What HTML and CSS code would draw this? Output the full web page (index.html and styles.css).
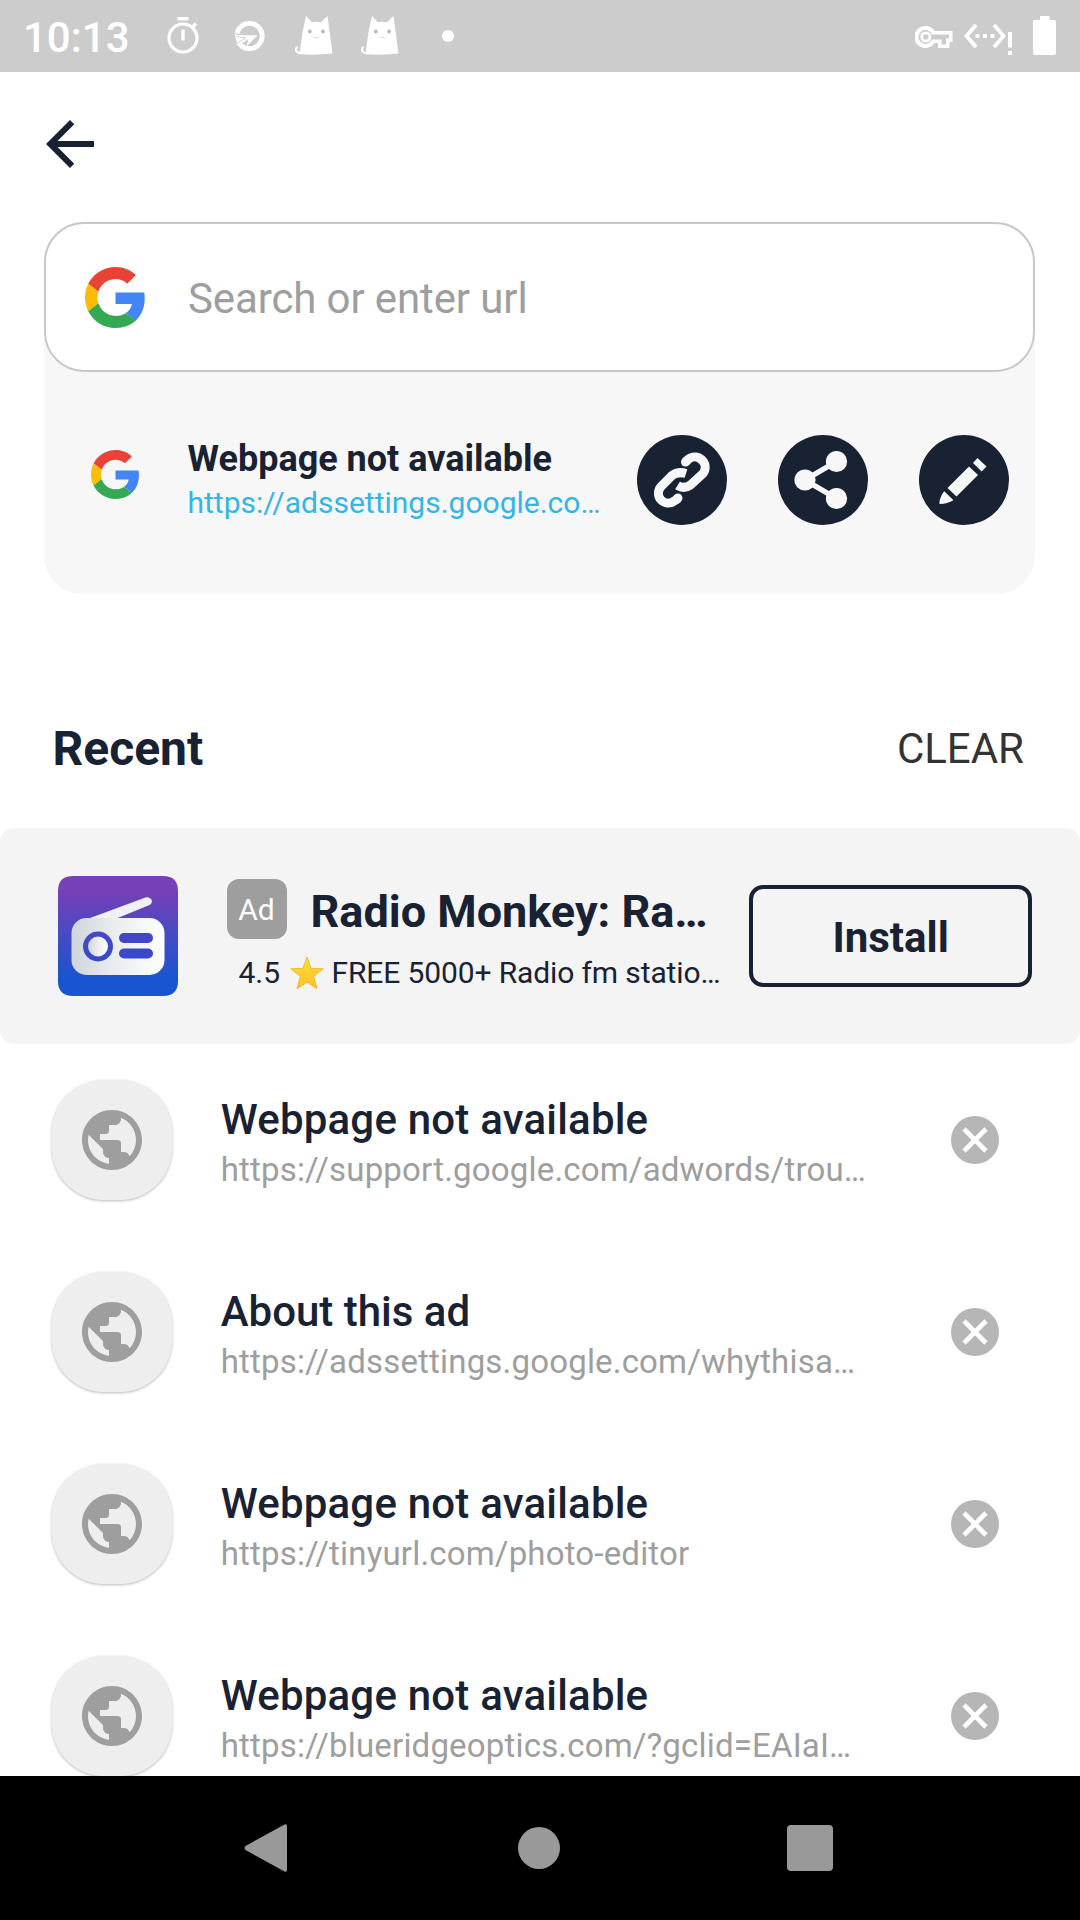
FILE: index.html
```html
<!DOCTYPE html>
<html lang="en">
<head>
<meta charset="utf-8">
<title>Search</title>
<link rel="stylesheet" href="styles.css">
</head>
<body>
<svg class="defs" width="0" height="0" aria-hidden="true">
  <symbol id="google" viewBox="0 0 48 48">
    <path fill="#EA4335" d="M24 9.5c3.54 0 6.71 1.22 9.21 3.6l6.85-6.85C35.9 2.38 30.47 0 24 0 14.62 0 6.51 5.38 2.56 13.22l7.98 6.19C12.43 13.72 17.74 9.5 24 9.5z"/>
    <path fill="#4285F4" d="M46.98 24.55c0-1.57-.15-3.09-.38-4.55H24v9.02h12.94c-.58 2.96-2.26 5.48-4.78 7.18l7.73 6c4.51-4.18 7.09-10.36 7.09-17.65z"/>
    <path fill="#FBBC05" d="M10.53 28.59c-.48-1.45-.76-2.99-.76-4.59s.27-3.14.76-4.59l-7.98-6.19C.92 16.46 0 20.12 0 24c0 3.88.92 7.54 2.56 10.78l7.97-6.19z"/>
    <path fill="#34A853" d="M24 48c6.48 0 11.93-2.13 15.89-5.81l-7.73-6c-2.15 1.45-4.92 2.3-8.16 2.3-6.26 0-11.57-4.22-13.47-9.91l-7.98 6.19C6.51 42.62 14.62 48 24 48z"/>
  </symbol>
  <symbol id="cat" viewBox="0 0 38 41">
    <path fill="#fff" d="M11 1l6 6.300q4 -1 9 0L32.500 1 37.500 38.500q-17 2-33 .5l3-22z"/>
    <path fill="none" stroke="#fff" stroke-width="2.200" stroke-linecap="round" d="M6 38.500C1.500 38 0 35 1.800 32.500"/>
    <circle cx="14.800" cy="16.500" r="1.900" fill="#bbb"/><circle cx="28" cy="16.500" r="1.900" fill="#bbb"/>
    <path stroke="#ddd" stroke-width="1" d="M19 22.500h5"/>
  </symbol>
  <symbol id="globe" viewBox="2 2 20 20">
    <path fill="#9e9e9e" d="M12 2C6.480 2 2 6.480 2 12s4.480 10 10 10 10-4.480 10-10S17.520 2 12 2zm-1 17.930c-3.950-.49-7-3.850-7-7.930 0-.62.08-1.210.21-1.790L9 15v1c0 1.100.9 2 2 2v1.930zm6.900-2.540c-.26-.81-1-1.390-1.900-1.390h-1v-3c0-.55-.45-1-1-1H8v-2h2c.55 0 1-.45 1-1V7h2c1.100 0 2-.9 2-2v-.41c2.930 1.190 5 4.060 5 7.410 0 2.080-.8 3.970-2.100 5.390z"/>
  </symbol>
  <symbol id="close" viewBox="0 0 48 48">
    <circle cx="24" cy="24" r="24" fill="#b6b6b6"/>
    <path stroke="#fff" stroke-width="4.600" d="M13 13l22 22M35 13L13 35"/>
  </symbol>
</svg>

<header class="status">
  <span class="clock">10:13</span>
  <svg class="ic-timer" width="32" height="37" viewBox="0 0 32 37"><g fill="none" stroke="#fff"><circle cx="16" cy="21" r="14" stroke-width="3.200"/><path d="M10.500 1.700h11" stroke-width="3.400"/><path d="M16 12.500v11M25 10.500l4-4" stroke-width="3.400"/></g></svg>
  <svg class="ic-circle" width="31" height="30" viewBox="0 0 31 30"><circle cx="15.500" cy="15" r="12.700" fill="none" stroke="#fff" stroke-width="4.800"/><path fill="#ccc" d="M0 12l12 2-9 9-3-2z"/><path fill="#fff" d="M.5 13.500L10 14.300H23.500L12.500 25.500 14.500 18 4.500 24.500 3 21.500z"/><path fill="none" stroke="#ccc" stroke-width=".9" d="M2 15.500l10 1.500-8.500 5"/></svg>
  <svg class="ic-cat" width="38" height="41"><use href="#cat"/></svg>
  <svg class="ic-cat2" width="38" height="41"><use href="#cat"/></svg>
  <span class="dot"></span>
  <span class="spacer"></span>
  <svg width="38" height="22" viewBox="0 0 38 22"><path fill="#fff" fill-rule="evenodd" d="M37.500 5H19.500A11 11 0 1 0 19.500 17H23v5h11.500v-6h3zM34 8.500v4h-3v6h-4.500v-5H17A7 7 0 1 1 17 8.500z"/><circle cx="10.800" cy="11" r="4.100" fill="none" stroke="#fff" stroke-width="2.800"/></svg>
  <svg class="ic-net" width="49" height="33" viewBox="0 0 49 33"><path fill="none" stroke="#fff" stroke-width="3.800" d="M12 2L2.500 13 12 24M30 2l9.500 11L30 24"/><path fill="#fff" d="M11.500 11h4v4h-4zM19 11h4v4h-4zM26.500 11h4v4h-4zM44 9h4v15.500h-4zM44 28h4v4h-4z"/></svg>
  <svg class="ic-bat" width="23" height="39" viewBox="0 0 23 39"><path fill="#fff" d="M7 0h9.500v4H21q2 0 2 2v31q0 2-2 2H2q-2 0-2-2V6q0-2 2-2h5z"/></svg>
</header>

<nav class="toolbar">
  <svg width="72" height="72" viewBox="0 0 24 24"><path fill="#192233" d="M20 11H7.830l5.590-5.590L12 4l-8 8 8 8 1.410-1.410L7.830 13H20v-2z"/></svg>
</nav>

<section class="panel">
  <div class="search">
    <svg width="61" height="61"><use href="#google"/></svg>
    <span class="placeholder">Search or enter url</span>
  </div>
  <div class="current">
    <svg class="g-small" width="49" height="49"><use href="#google"/></svg>
    <div class="current-text">
      <div class="current-title">Webpage not available</div>
      <div class="current-url">https://adssettings.google.co…</div>
    </div>
    <div class="actions">
      <svg width="90" height="90" viewBox="0 0 90 90"><circle cx="45" cy="45" r="45" fill="#192233"/><g transform="translate(-1 0)" fill="none" stroke="#f7f7f7" stroke-width="9" stroke-linecap="round"><path d="M49.500 27l2.500-2.500C61 17 74.500 28 67 38.500L54.500 50Q48 54.500 41.500 50.500" stroke-linecap="butt"/><path d="M49.500 27l1-1"/><path d="M50 38.500Q42 36 36 40.500L25.500 51C16.500 61 29 73.500 39 65.500L42.500 63" stroke-linecap="butt"/><path d="M41 64l1-1"/></g></svg>
      <svg width="90" height="90" viewBox="0 0 90 90"><circle cx="45" cy="45" r="45" fill="#192233"/><path fill="none" stroke="#f7f7f7" stroke-width="5.500" d="M58.500 26.500L27 45l31.500 18.500"/><g fill="#f7f7f7"><circle cx="58.500" cy="26.500" r="10.600"/><circle cx="27" cy="45" r="10.600"/><circle cx="58.500" cy="63.500" r="10.600"/></g></svg>
      <svg width="90" height="90" viewBox="0 0 90 90"><circle cx="45" cy="45" r="45" fill="#192233"/><path transform="translate(-.5 0)" fill="#f7f7f7" d="M59 23l9 8.500-4.800 5L54.500 28zM50.500 31.500l9 8.500L38 61.500l-9-8.500zM25.700 56.300l9.300 9c-4 2.500-9 3.600-13.300 3.800-.8-.2-1-.7-.8-1.500.5-4 2-8 4.800-11.300z"/></svg>
    </div>
  </div>
</section>

<div class="recent-head">
  <h2 class="recent">Recent</h2>
  <span class="clear">CLEAR</span>
</div>

<section class="ad">
  <svg class="ad-icon" width="120" height="120" viewBox="0 0 120 120">
    <defs>
      <linearGradient id="sky" x1="0" y1="0" x2="0" y2="1"><stop offset=".12" stop-color="#7640b8"/><stop offset=".85" stop-color="#1955d0"/></linearGradient>
      <linearGradient id="shell"><stop offset="0" stop-color="#cfd5dc"/><stop offset=".45" stop-color="#eaecee"/><stop offset="1" stop-color="#fff"/></linearGradient>
      <linearGradient id="inner" x1="0" y1="0" x2="0" y2="1"><stop offset="0" stop-color="#4848c6"/><stop offset="1" stop-color="#344bc9"/></linearGradient>
    </defs>
    <path fill="url(#sky)" d="M15 0h90q15 0 15 15v90q0 15-15 15H15q-15 0-15-15V15Q0 0 15 0z"/>
    <path fill="#eff1f4" d="M28 43.500L87.500 21.500C93 20 96.500 26.500 91.500 29L56 43.500z"/>
    <rect x="13.500" y="42" width="93" height="57" rx="15" fill="url(#shell)"/>
    <circle cx="40" cy="70.500" r="15" fill="url(#inner)"/><circle cx="40" cy="70.500" r="10" fill="url(#shell)"/>
    <rect x="61" y="57" width="34" height="10" rx="5" fill="#4346c7"/><rect x="61" y="72.500" width="34" height="10" rx="5" fill="#3948c9"/>
  </svg>
  <div class="ad-body">
    <div class="ad-top"><span class="badge">Ad</span><span class="ad-title">Radio Monkey: Ra…</span></div>
    <div class="ad-desc"><span class="rate">4.5</span><svg width="34" height="34" viewBox="0 0 34 34"><defs><linearGradient id="gold" x1="0" y1="0" x2="0" y2="1"><stop offset="0" stop-color="#fee034"/><stop offset="1" stop-color="#fbc02d"/></linearGradient></defs><path fill="url(#gold)" stroke="#eebc2b" stroke-width="1" d="M17 1l4.200 11.500 12 .3-9.500 7.500L27 32.800l-10-6.600-10 6.600 3.300-12.500L.8 12.800l12-.3z"/></svg><span class="ad-copy">FREE 5000+ Radio fm statio…</span></div>
  </div>
  <div class="install">Install</div>
</section>

<main class="list">
  <div class="row"><div class="avatar"><svg width="60" height="60"><use href="#globe"/></svg></div><div class="text"><div class="title">Webpage not available</div><div class="url">https://support.google.com/adwords/trou…</div></div><svg class="x" width="48" height="48"><use href="#close"/></svg></div>
  <div class="row"><div class="avatar"><svg width="60" height="60"><use href="#globe"/></svg></div><div class="text"><div class="title short">About this ad</div><div class="url">https://adssettings.google.com/whythisa…</div></div><svg class="x" width="48" height="48"><use href="#close"/></svg></div>
  <div class="row"><div class="avatar"><svg width="60" height="60"><use href="#globe"/></svg></div><div class="text"><div class="title">Webpage not available</div><div class="url">https://tinyurl.com/photo-editor</div></div><svg class="x" width="48" height="48"><use href="#close"/></svg></div>
  <div class="row"><div class="avatar"><svg width="60" height="60"><use href="#globe"/></svg></div><div class="text"><div class="title">Webpage not available</div><div class="url">https://blueridgeoptics.com/?gclid=EAIaI…</div></div><svg class="x" width="48" height="48"><use href="#close"/></svg></div>
</main>

<footer class="navbar">
  <svg class="nav-back" width="44" height="48" viewBox="0 0 44 48"><path fill="#999" d="M40.500.5Q43 -.5 43 2v44q0 2.500-2.500 1.500L1.500 26Q-.5 24 1.500 22z"/></svg>
  <svg width="42" height="42" viewBox="0 0 42 42"><circle cx="21" cy="21" r="21" fill="#999"/></svg>
  <svg class="nav-recents" width="46" height="46" viewBox="0 0 46 46"><rect width="46" height="46" rx="4" fill="#999"/></svg>
</footer>
</body>
</html>
```
FILE: styles.css
```css
* { box-sizing: border-box; }
body {
  margin: 0;
  width: 1080px;
  height: 1920px;
  overflow: hidden;
  display: flex;
  flex-direction: column;
  background: #fff;
  color: #192233;
  font-family: Roboto, "Liberation Sans", sans-serif;
}
svg { display: block; flex: none; }
.defs { position: absolute; }

.status {
  flex: none;
  height: 72px;
  display: flex;
  align-items: flex-start;
  padding: 0 24px 0 23px;
  background: #ccc;
}
.status > svg { margin-top: 26px; }
.clock { width: 145px; font-size: 42px; font-weight: 500; line-height: 50px; padding-top: 13px; color: #fff; }
.status .ic-timer { margin: 17px 0 0 -1px; }
.status .ic-circle { margin: 21px 0 0 35px; }
.status .ic-cat { margin: 15px 0 0 30px; }
.status .ic-cat2 { margin: 15px 0 0 28px; }
.dot { width: 12px; height: 12px; margin: 30px 0 0 43px; border-radius: 50%; background: #fff; }
.spacer { flex: 1; }
.status .ic-net { margin: 23px 0 0 11px; }
.status .ic-bat { margin: 16px 0 0 20px; }

.toolbar { flex: none; height: 150px; padding: 36px 0 0 34px; }

.panel {
  flex: none;
  width: 991px;
  height: 372px;
  margin-left: 44px;
  border-radius: 38px;
  background: #f7f7f7;
}
.search {
  height: 150px;
  display: flex;
  align-items: center;
  padding-left: 39px;
  gap: 42px;
  border: 2px solid #c8c8c8;
  border-radius: 40px;
  background: #fff;
}
.placeholder { font-size: 42px; line-height: 50px; padding-top: 3px; letter-spacing: -.12px; color: #9e9e9e; }
.current { display: flex; align-items: flex-start; padding: 63px 26px 0 47px; }
.g-small { margin-top: 15px; }
.current-text { flex: 1; margin-left: 47.500px; white-space: nowrap; }
.current-title { font-size: 36px; font-weight: 700; line-height: 44px; padding-top: 2px; }
.current-url { font-size: 30px; line-height: 36px; margin-top: 4px; color: #33b5e5; }
.actions { display: flex; gap: 51px; }

.recent-head { flex: none; height: 234px; display: flex; justify-content: space-between; padding: 121px 56px 0 52.500px; }
.recent { margin: 0; font-size: 48px; font-weight: 700; line-height: 68px; }
.clear { font-size: 42px; line-height: 68px; color: #333; }

.ad {
  flex: none;
  height: 216px;
  display: flex;
  padding: 48px 48px 0 58px;
  border-radius: 14px;
  background: #f4f4f4;
}
.ad-icon { flex: none; }
.ad-body { width: 523px; margin-left: 48.500px; padding-top: 3px; white-space: nowrap; }
.ad-top { display: flex; }
.badge { width: 60px; height: 60px; border-radius: 12px; background: #9e9e9e; color: #fff; font-size: 30px; line-height: 61px; text-align: center; }
.ad-title { margin-left: 24px; font-size: 45px; font-weight: 700; line-height: 64px; padding-top: 1px; }
.ad-desc { display: flex; align-items: center; height: 34px; margin-top: 12px; padding-left: 12px; font-size: 30px; line-height: 34px; }
.rate { width: 51px; }
.ad-copy { margin-left: 8px; letter-spacing: -.12px; }
.install { width: 283px; height: 102px; margin-top: 9px; border: 4px solid #192233; border-radius: 14px; font-size: 42px; font-weight: 700; line-height: 98px; text-align: center; }

.list { flex: none; height: 732px; padding-top: 34px; overflow: hidden; }
.row { height: 192px; display: flex; align-items: flex-start; padding: 1px 81px 0 52px; }
.avatar { width: 120px; height: 120px; margin-top: 1px; border-radius: 52px; background: #eee; display: flex; align-items: center; justify-content: center; box-shadow: 0 1px 3px rgba(0, 0, 0, .28); }
.avatar svg { margin-top: -1px; }
.text { flex: 1; margin-left: 48.700px; padding-top: 16px; white-space: nowrap; }
.title { font-size: 42px; font-weight: 500; line-height: 50px; letter-spacing: .2px; }
.title.short { letter-spacing: 0; }
.url { margin-top: 5px; font-size: 33px; line-height: 40px; letter-spacing: .18px; color: #9e9e9e; }
.x { margin-top: 37px; }

.navbar { flex: none; height: 144px; display: grid; grid-template-columns: 270px 270px 270px; justify-content: center; place-items: center; padding-right: 2px; background: #000; }
.nav-back { margin-right: 6px; }
.nav-recents { margin-left: 2px; }
```
